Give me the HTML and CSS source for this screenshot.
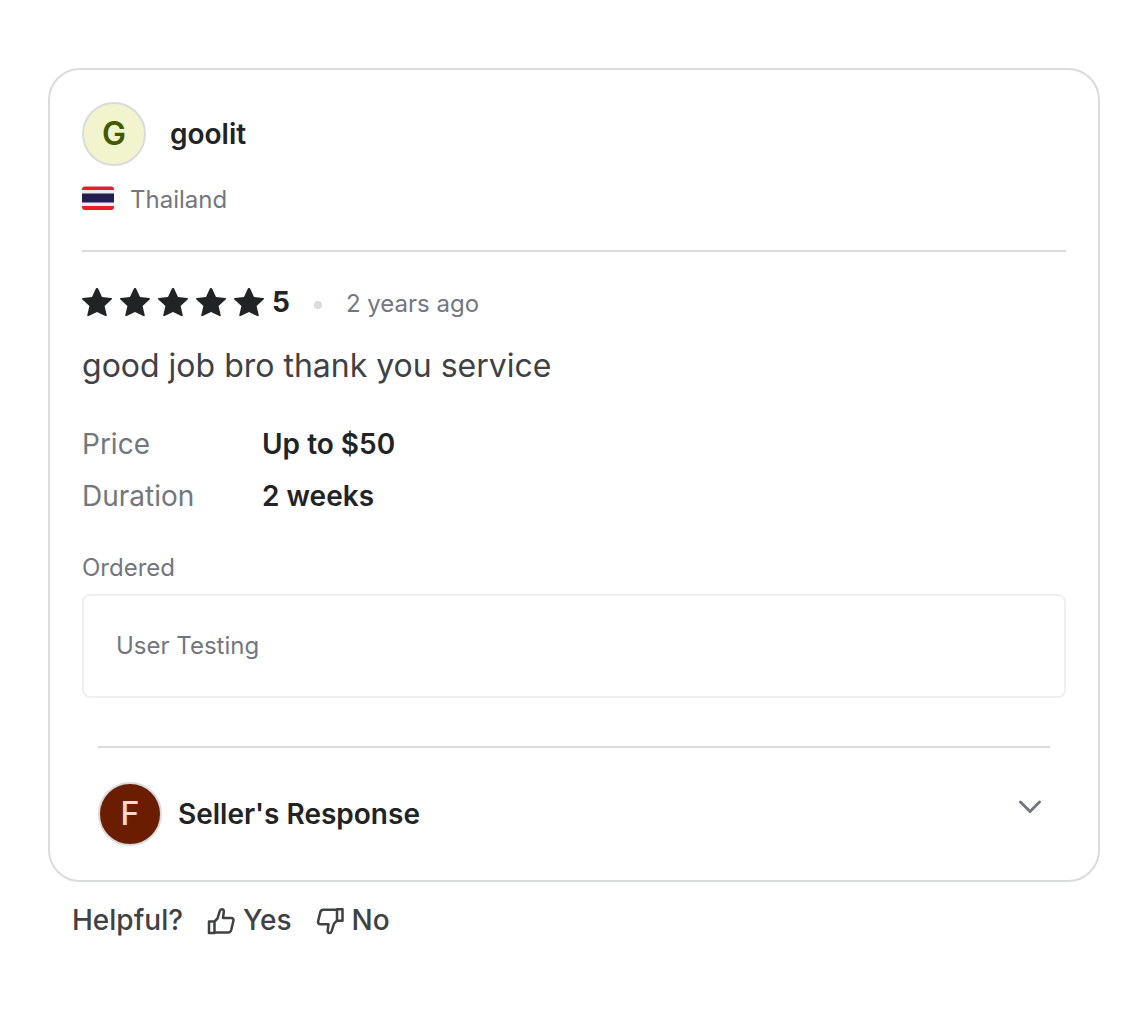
FILE: index.html
```html
<!DOCTYPE html>
<html lang="en">
<head>
  <meta charset="UTF-8">
  <meta name="viewport" content="width=device-width, initial-scale=1.0">
  <title>Review by goolit</title>
  <link rel="stylesheet" href="styles.css">
</head>
<body>
  <svg class="sprite" aria-hidden="true">
    <symbol id="star" viewBox="0 0 30 30">
      <path d="M13.900 0.600q1.100-1.400 2.200 0l3.900 8.400 9.100.900q1.500.400.500 1.600l-7 6.400 2.100 9.200q.1 1.600-1.400 1L15 23.900l-8.300 4.200q-1.500.6-1.400-1l2.100-9.200-7-6.400q-1-1.200.5-1.600l9.100-.9z"/>
    </symbol>
  </svg>

  <article class="review-card">
    <div class="reviewer">
      <span class="avatar avatar-green">G</span>
      <span class="name">goolit</span>
    </div>
    <div class="country">
      <svg class="flag" viewBox="0 0 32 28" role="img" aria-label="Flag of Thailand">
        <clipPath id="flagShape"><rect y="0.5" width="32" height="23.5" rx="3"/></clipPath>
        <g clip-path="url(#flagShape)">
          <rect width="32" height="24" fill="#ed1c24"/>
          <rect y="4" width="32" height="16" fill="#ececf0"/>
          <rect y="7.500" width="32" height="9" fill="#241d4f"/>
        </g>
      </svg>
      <span>Thailand</span>
    </div>

    <hr>

    <div class="rating">
      <div class="stars" role="img" aria-label="5 out of 5 stars">
        <svg><use href="#star"/></svg>
        <svg><use href="#star"/></svg>
        <svg><use href="#star"/></svg>
        <svg><use href="#star"/></svg>
        <svg><use href="#star"/></svg>
      </div>
      <strong>5</strong>
      <span class="dot"></span>
      <time>2 years ago</time>
    </div>
    <p class="comment">good job bro thank you service</p>

    <dl class="facts">
      <dt>Price</dt>
      <dd>Up to $50</dd>
      <dt>Duration</dt>
      <dd>2 weeks</dd>
    </dl>

    <div class="ordered-label">Ordered</div>
    <div class="ordered-box">User Testing</div>

    <div class="seller">
      <hr>
      <button type="button" class="seller-toggle" aria-expanded="false">
        <span class="avatar avatar-brown">F</span>
        <span class="name">Seller's Response</span>
        <svg class="chevron" viewBox="0 0 24 16"><path d="M2.5 3 12 12.5 21.5 3"/></svg>
      </button>
    </div>
  </article>

  <div class="helpful">
    <span>Helpful?</span>
    <button type="button">
      <svg viewBox="0 0 28 32"><path d="M2 17.500h5.500v11.500H2zM7.500 17.500l3-3 2.300-7.500c.4-1.300 1-1.800 2-1.800 1.500 0 2.200 1.200 2 2.700l-.8 6.100h8c1.900 0 2.800 1.200 2.400 2.800l-2.200 9.200c-.5 1.800-1.400 2.500-3 2.500H7.500"/></svg>
      Yes
    </button>
    <button type="button">
      <svg viewBox="0 0 28 32"><path d="M26.500 16.700H21V5.200h5.500zM21 16.700l-3 3-2.300 7.500c-.4 1.300-1 1.800-2 1.800-1.500 0-2.200-1.200-2-2.700l.8-6.100h-8c-1.900 0-2.800-1.200-2.400-2.800l2.200-9.200c.5-1.800 1.400-2.500 3-2.500H21"/></svg>
      No
    </button>
  </div>
</body>
</html>
```

FILE: styles.css
```css
* {
  box-sizing: border-box;
}
body {
  margin: 0;
  padding: 68px 44px 48px 48px;
  background-color: #fff;
  color: #222325;
  font-family: Inter, Roboto, sans-serif;
  font-size: 24px;
  line-height: 36px;
}
button {
  padding: 0;
  border: none;
  background: none;
  color: inherit;
  font: inherit;
  cursor: pointer;
}
hr {
  height: 2px;
  margin: 32px 0;
  border: none;
  background-color: #dadbdd;
}
.sprite {
  display: none;
}
.review-card {
  padding: 32px 32px 34px;
  border: 2px solid #dadbdd;
  border-radius: 32px;
}
.reviewer {
  display: flex;
  align-items: center;
  gap: 24px;
}
.avatar {
  display: flex;
  align-items: center;
  justify-content: center;
  width: 64px;
  height: 64px;
  border: 2px solid #dadbdd;
  border-radius: 50%;
  font-size: 32px;
  font-weight: 600;
}
.avatar-green {
  background-color: #f1f4cd;
  color: #435900;
}
.avatar-brown {
  background-color: #6b1d00;
  color: #ffd9cc;
  font-weight: 500;
}
.name {
  font-size: 28px;
  font-weight: 600;
}
.country {
  display: flex;
  align-items: center;
  gap: 16px;
  margin-top: 16px;
  color: #74767e;
}
.flag {
  width: 32px;
  height: 28px;
}
.rating {
  display: flex;
  align-items: baseline;
}
.stars {
  display: flex;
  align-self: center;
  gap: 8px;
  margin-right: 8px;
}
.stars svg {
  width: 30px;
  height: 30px;
  fill: #222325;
}
.rating strong {
  font-size: 28px;
  font-weight: 700;
}
.dot {
  align-self: center;
  width: 8px;
  height: 8px;
  margin: 4px 24px 0;
  border-radius: 50%;
  background-color: #dadbdd;
}
.rating time {
  color: #74767e;
}
.comment {
  margin: 20px 0 32px;
  color: #404145;
  font-size: 32px;
  line-height: 48px;
}
.facts {
  display: grid;
  grid-template-columns: 180px 1fr;
  row-gap: 8px;
  margin: 0 0 32px;
  font-size: 28px;
  line-height: 44px;
}
.facts dt {
  color: #74767e;
}
.facts dd {
  margin: 0;
  font-weight: 600;
}
.ordered-label {
  color: #74767e;
}
.ordered-box {
  margin-top: 8px;
  padding: 32px;
  border: 2px solid #efeff0;
  border-radius: 8px;
  color: #74767e;
}
.seller {
  margin-top: 48px;
  padding: 0 16px;
}
.seller hr {
  margin: 0 0 34px;
}
.seller-toggle {
  display: flex;
  align-items: center;
  gap: 16px;
  width: 100%;
  text-align: left;
}
.chevron {
  width: 24px;
  height: 16px;
  margin: 0 8px 14px auto;
  fill: none;
  stroke: #74767e;
  stroke-width: 3;
  stroke-linecap: round;
}
.helpful {
  display: flex;
  align-items: center;
  gap: 24px;
  margin-top: 16px;
  padding-left: 24px;
  color: #404145;
  font-size: 28px;
  font-weight: 500;
  line-height: 44px;
}
.helpful button {
  display: flex;
  align-items: center;
  gap: 8px;
}
.helpful svg {
  width: 28px;
  height: 32px;
  fill: none;
  stroke: #404145;
  stroke-width: 2.5;
  stroke-linejoin: round;
}
```
